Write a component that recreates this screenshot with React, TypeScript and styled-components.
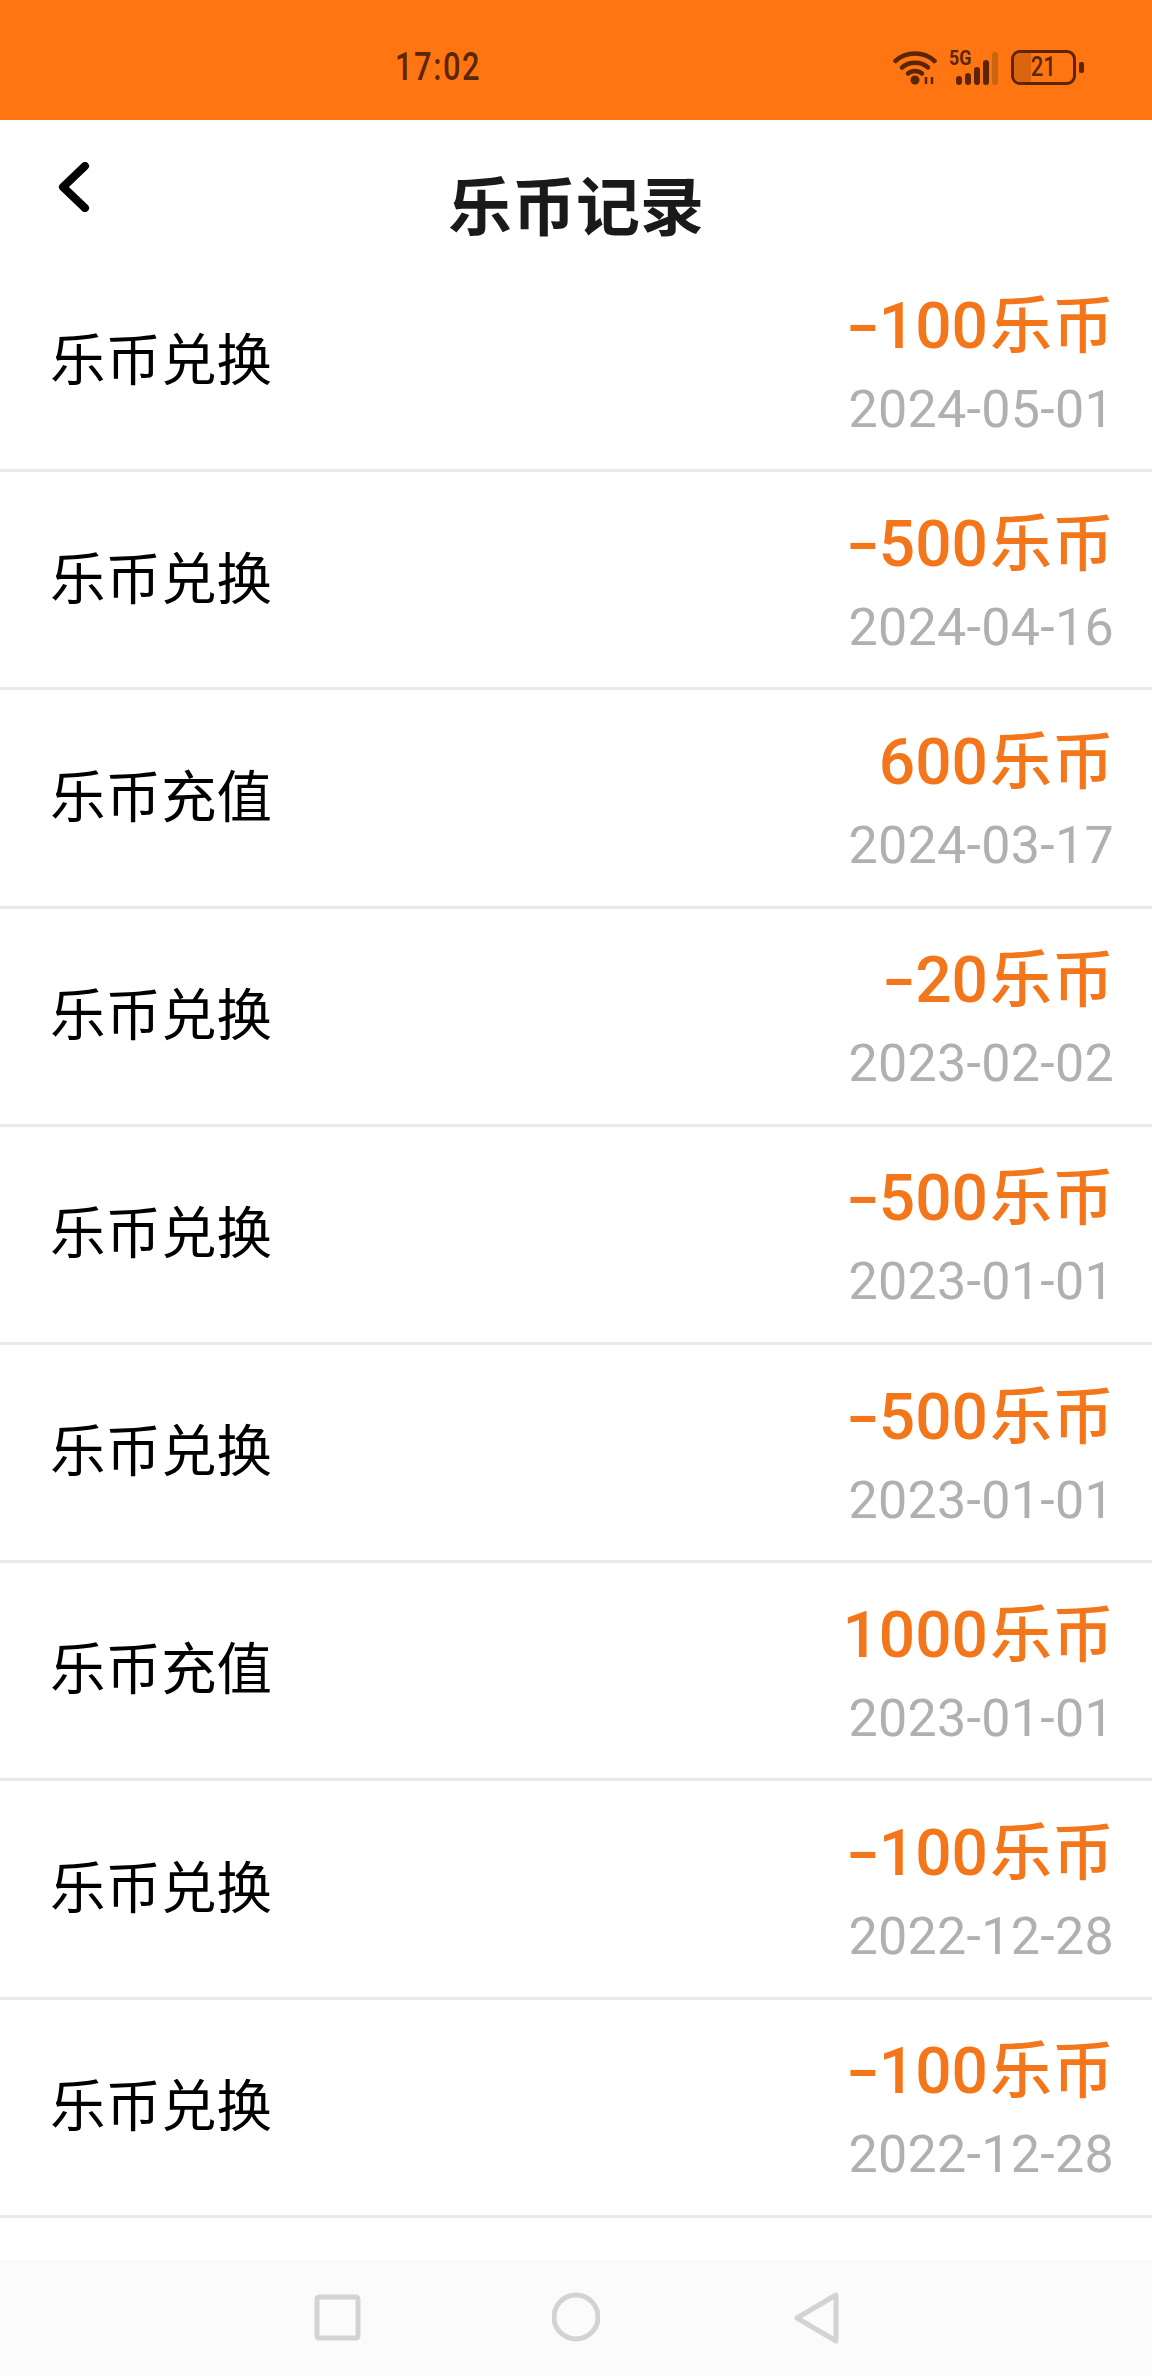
import React from "react";
import styled, { createGlobalStyle } from "styled-components";

const GlobalStyle = createGlobalStyle`
  html, body {
    margin: 0;
    padding: 0;
    background: #fff;
  }
`;

const cjk = `"Noto Sans CJK SC", sans-serif`;
const digits = `Roboto, "Noto Sans CJK SC", sans-serif`;

const Page = styled.div`
  width: 1152px;
  height: 2376px;
  display: flex;
  flex-direction: column;
  overflow: hidden;
  background: #fff;
`;

const StatusBar = styled.div`
  height: 120px;
  flex: none;
  background: #ff7511;
  color: #5a2606;
  display: flex;
  align-items: center;
  padding: 15px 68px 0 395px;
  box-sizing: border-box;
`;

const Clock = styled.span`
  font: 500 39px/1 Roboto, sans-serif;
  letter-spacing: 2px;
  display: inline-block;
  transform: scaleX(0.79);
  transform-origin: left center;
`;

const StatusIcons = styled.div`
  margin-left: auto;
  display: flex;
  align-items: center;
`;

const Signal = styled.div`
  margin-left: 19px;
  display: flex;
  align-items: flex-end;
  gap: 3px;
  height: 35px;
  position: relative;
`;

const FiveG = styled.span`
  position: absolute;
  left: -7px;
  top: 0;
  font: 700 21px/17px Roboto, sans-serif;
  transform: scaleX(0.85);
  transform-origin: left top;
`;

const Bar = styled.i<{ $h: number; $dim?: boolean }>`
  display: block;
  width: 6px;
  height: ${(p) => p.$h}px;
  border-radius: 3px;
  background: ${(p) => (p.$dim ? "#c9640f" : "#5a2606")};
`;

const Battery = styled.div`
  margin-left: 13px;
  width: 65px;
  height: 35px;
  box-sizing: border-box;
  border: 3px solid #5a2606;
  border-radius: 9px;
  overflow: hidden;
  position: relative;
  display: flex;
  align-items: center;
  justify-content: center;
  font: 500 27px/1 Roboto, sans-serif;
`;

const BatteryFill = styled.span`
  position: absolute;
  left: 0;
  top: 0;
  bottom: 0;
  width: 28%;
  background: #d9660f;
`;

const BatteryLabel = styled.span`
  position: relative;
  transform: scaleX(0.82);
`;

const BatteryNub = styled.i`
  display: block;
  width: 5px;
  height: 11px;
  margin-left: 3px;
  border-radius: 2px;
  background: #5a2606;
`;

const Header = styled.div`
  height: 134px;
  flex: none;
  display: grid;
  grid-template-columns: 1fr auto 1fr;
`;

const BackIcon = styled.svg`
  width: 36px;
  height: 50px;
  margin: 42px 0 0 56px;
`;

const Title = styled.h1`
  margin: 45px 0 0;
  font: 700 64px/74px ${cjk};
  color: #1a1a1a;
`;

const List = styled.div`
  display: flex;
  flex-direction: column;
`;

const Row = styled.div`
  height: 218.2px;
  flex: none;
  box-sizing: border-box;
  border-bottom: 3px solid #e9e9e9;
  padding: 0 38px 0 50px;
  display: flex;
  align-items: center;
  justify-content: space-between;
`;

const RowLabel = styled.span`
  font: 400 55.5px/1 ${cjk};
  color: #000;
  margin-bottom: 9px;
`;

const RowMeta = styled.div`
  display: flex;
  flex-direction: column;
  align-items: flex-end;
  margin-top: -5px;
`;

const Amount = styled.span`
  font: 500 64px/84px ${digits};
  color: #f4761b;
  margin-right: 0;
`;

const Sign = styled.span`
  display: inline-block;
  width: 32px;
  text-align: center;
  transform: scaleX(1.5);
`;

const Unit = styled.span`
  font: 500 62px/84px ${cjk};
  margin-left: 2px;
`;

const RowDate = styled.span`
  font: 400 52px/60px ${digits};
  letter-spacing: 0.3px;
  color: #b0b0b0;
  margin-top: 11px;
`;

const NavBar = styled.div`
  margin-top: auto;
  height: 116px;
  flex: none;
  background: #fbfbfb;
  display: flex;
  align-items: flex-start;
  padding: 32px 0 0 313px;
  box-sizing: border-box;
  gap: 191px;
`;

const NavIcon = styled.svg`
  width: 48px;
  height: 52px;
  fill: none;
  stroke: #d3d3d3;
  stroke-width: 5;
  stroke-linejoin: round;
`;

const records = [
  { label: "乐币兑换", sign: "-", amount: "100", date: "2024-05-01" },
  { label: "乐币兑换", sign: "-", amount: "500", date: "2024-04-16" },
  { label: "乐币充值", sign: "", amount: "600", date: "2024-03-17" },
  { label: "乐币兑换", sign: "-", amount: "20", date: "2023-02-02" },
  { label: "乐币兑换", sign: "-", amount: "500", date: "2023-01-01" },
  { label: "乐币兑换", sign: "-", amount: "500", date: "2023-01-01" },
  { label: "乐币充值", sign: "", amount: "1000", date: "2023-01-01" },
  { label: "乐币兑换", sign: "-", amount: "100", date: "2022-12-28" },
  { label: "乐币兑换", sign: "-", amount: "100", date: "2022-12-28" },
];

const WifiIcon = () => (
  <svg width="44" height="35" viewBox="0 0 44 35" fill="none" stroke="#5a2606" strokeWidth="4.5" strokeLinecap="round">
    <path d="M2.5 11C13 1 31 1 41.5 11" />
    <path d="M9 17.5C16 11 28 11 35 17.5" />
    <path d="M15 23.5C19 20 25 20 29 23.5" />
    <circle cx="22" cy="30" r="4.5" fill="#5a2606" stroke="none" />
    <path d="M33 27v7M39 27v7" strokeWidth="2.5" strokeLinecap="butt" />
  </svg>
);

export default function App() {
  return (
    <Page>
      <GlobalStyle />
      <StatusBar>
        <Clock>17:02</Clock>
        <StatusIcons>
          <WifiIcon />
          <Signal>
            <FiveG>5G</FiveG>
            <Bar $h={9} />
            <Bar $h={12} />
            <Bar $h={18} />
            <Bar $h={25} />
            <Bar $h={33} $dim />
          </Signal>
          <Battery>
            <BatteryFill />
            <BatteryLabel>21</BatteryLabel>
          </Battery>
          <BatteryNub />
        </StatusIcons>
      </StatusBar>
      <Header>
        <BackIcon viewBox="0 0 36 50" fill="none" stroke="#000" strokeWidth="8" strokeLinecap="round" strokeLinejoin="round">
          <path d="M29 4L7 25L29 46" />
        </BackIcon>
        <Title>乐币记录</Title>
      </Header>
      <List>
        {records.map((r, i) => (
          <Row key={i}>
            <RowLabel>{r.label}</RowLabel>
            <RowMeta>
              <Amount>
                {r.sign && <Sign>{r.sign}</Sign>}
                {r.amount}
                <Unit>乐币</Unit>
              </Amount>
              <RowDate>{r.date}</RowDate>
            </RowMeta>
          </Row>
        ))}
      </List>
      <NavBar>
        <NavIcon viewBox="0 0 48 52">
          <rect x="4" y="5" width="41" height="41" rx="2" />
        </NavIcon>
        <NavIcon viewBox="0 0 48 52">
          <circle cx="24" cy="25" r="22" />
        </NavIcon>
        <NavIcon viewBox="0 0 48 52">
          <path d="M45 3V49L6 26Z" />
        </NavIcon>
      </NavBar>
    </Page>
  );
}
